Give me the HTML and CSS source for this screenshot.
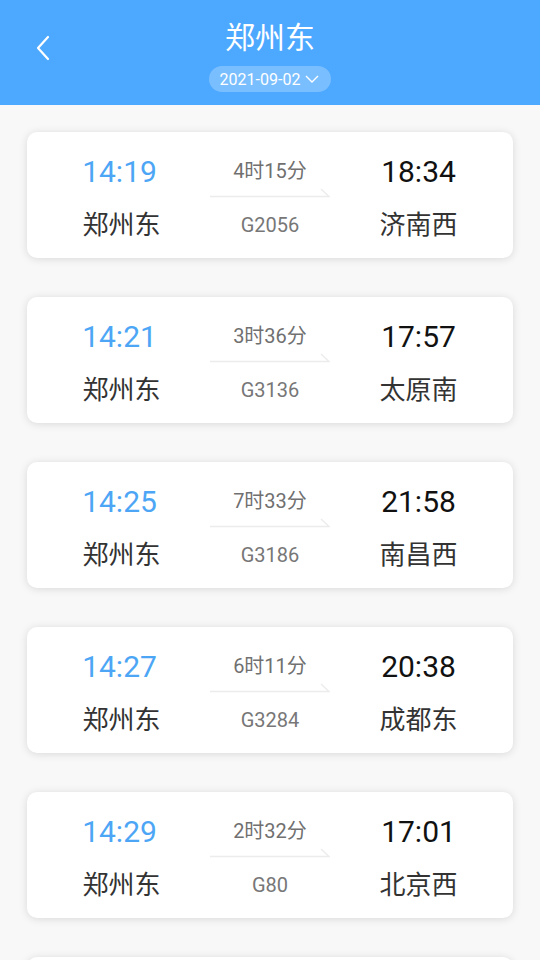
FILE: index.html
```html
<!DOCTYPE html>
<html lang="zh-CN">
  <head>
    <meta charset="UTF-8" />
    <meta name="viewport" content="width=device-width, initial-scale=1.0" />
    <title>郑州东</title>
    <link rel="stylesheet" href="styles.css">
  </head>
  <body>
    <div class="header">
      <svg class="back" width="16" height="26" viewBox="0 0 16 26">
        <polyline points="13,2 3,13 13,24" fill="none" stroke="#fff" stroke-width="2.2" stroke-linecap="round" stroke-linejoin="round" />
      </svg>
      <div class="title">郑州东</div>
      <div class="date">
        <span>2021-09-02</span>
        <svg width="14" height="10" viewBox="0 0 14 10">
          <polyline points="1,2 7,8 13,2" fill="none" stroke="#fff" stroke-width="1.4" />
        </svg>
      </div>
    </div>

    <div class="list" id="list"></div>

    <script>
      const trains = [
        { dep: "14:19", arr: "18:34", dur: "4时15分", no: "G2056", to: "济南西" },
        { dep: "14:21", arr: "17:57", dur: "3时36分", no: "G3136", to: "太原南" },
        { dep: "14:25", arr: "21:58", dur: "7时33分", no: "G3186", to: "南昌西" },
        { dep: "14:27", arr: "20:38", dur: "6时11分", no: "G3284", to: "成都东" },
        { dep: "14:29", arr: "17:01", dur: "2时32分", no: "G80", to: "北京西" },
        { dep: "14:33", arr: "19:12", dur: "4时39分", no: "G1578", to: "上海虹桥" },
      ];

      const list = document.getElementById("list");
      trains.forEach((t) => {
        const card = document.createElement("div");
        card.className = "card";
        card.innerHTML =
          '<div class="time dep">' + t.dep + "</div>" +
          '<div class="dur">' + t.dur + "</div>" +
          '<div class="time arr">' + t.arr + "</div>" +
          "<div></div>" +
          '<svg class="arrow" width="120" height="10" viewBox="0 0 120 10">' +
          '<polyline points="0,8.5 119,8.5 111,1" fill="none" stroke="#ececec" stroke-width="1.5" /></svg>' +
          "<div></div>" +
          '<div class="station from">郑州东</div>' +
          '<div class="no">' + t.no + "</div>" +
          '<div class="station to">' + t.to + "</div>";
        list.appendChild(card);
      });
    </script>
  </body>
</html>
```

FILE: styles.css
```css
body {
  margin: 0;
  padding: 0;
  background-color: #f8f8f8;
  font-family: Roboto, "Noto Sans CJK SC", sans-serif;
}
.header {
  position: relative;
  height: 105px;
  box-sizing: border-box;
  padding-top: 19px;
  background-color: #4da8ff;
  display: flex;
  flex-direction: column;
  align-items: center;
  color: white;
}
.back {
  position: absolute;
  left: 35px;
  top: 35px;
}
.title {
  font-size: 30px;
  line-height: 36px;
  margin-top: 1px;
  margin-bottom: -1px;
}
.date {
  margin-top: 11px;
  height: 26px;
  padding: 0 12px 0 11px;
  border-radius: 13px;
  background-color: rgba(255, 255, 255, 0.25);
  display: flex;
  align-items: center;
  gap: 5px;
  font-size: 16px;
}
.list {
  padding: 27px 27px 0;
  display: flex;
  flex-direction: column;
  gap: 39px;
}
.card {
  height: 126px;
  box-sizing: border-box;
  padding: 22px 0 17px;
  background-color: white;
  border-radius: 10px;
  box-shadow: 0 1px 8px rgba(0, 0, 0, 0.13);
  display: grid;
  grid-template-columns: 1fr 120px 1fr;
  grid-template-rows: 36px 15px 36px;
  justify-items: center;
  align-items: center;
}
.time {
  font-size: 30px;
  line-height: 36px;
}
.dep {
  color: #4da6f5;
  margin-left: 2px;
}
.arr {
  color: #111;
  margin-right: 6px;
}
.dur {
  font-size: 20px;
  line-height: 24px;
  color: #707070;
  margin-top: -2px;
}
.arrow {
  align-self: start;
  margin-top: -2px;
}
.station {
  font-size: 26px;
  line-height: 36px;
  color: #333;
  margin-top: 4px;
}
.station.from {
  margin-left: 6px;
}
.station.to {
  margin-right: 6px;
}
.no {
  font-size: 20px;
  line-height: 24px;
  color: #777;
  margin-top: 4px;
}
```
